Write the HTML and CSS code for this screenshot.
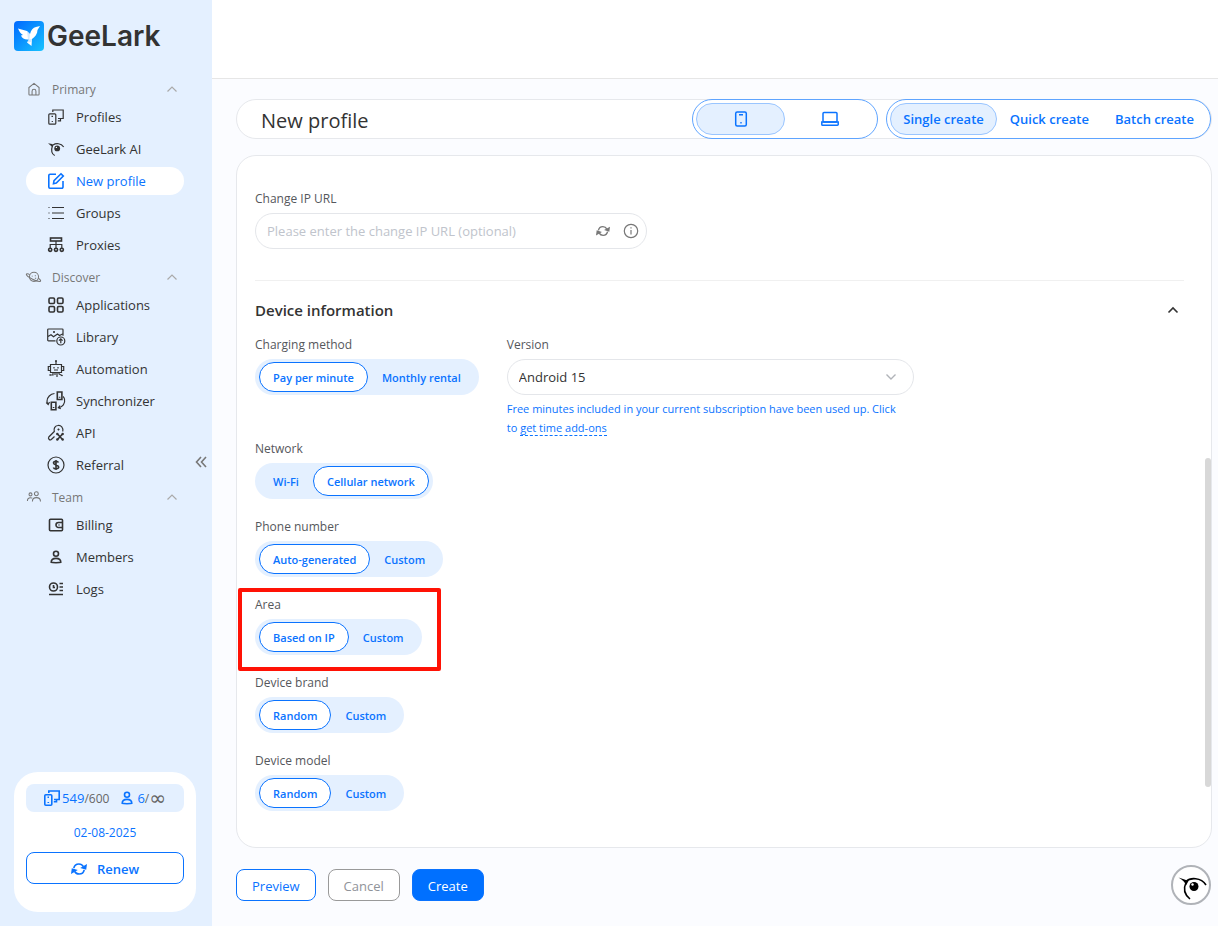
FILE: index.html
```html
<!DOCTYPE html>
<html lang="en">
<head>
    <meta charset="UTF-8">
    <meta name="viewport" content="width=device-width, initial-scale=1.0">
    <title>GeeLark - New profile</title>
    <link rel="stylesheet" href="styles.css">
</head>
<body>

<svg class="defs" aria-hidden="true">
    <symbol id="i-up" viewBox="0 0 12 12"><path d="M1.500 8.500 6 4l4.500 4.500"/></symbol>
    <symbol id="i-devices" viewBox="0 0 16 16">
        <rect x=".8" y="4.800" width="7" height="10.400" rx="1"/>
        <path d="M3.500 7.300h1.500M4.300 12v1M4.800 3V1h10.400v8.500H10M12.500 9.500v2.300H9.800"/>
    </symbol>
    <symbol id="i-user" viewBox="0 0 16 16">
        <circle cx="8" cy="4.800" r="2.500"/>
        <path d="M3.200 13.300c0-2.600 1.800-3.900 4.800-3.900s4.800 1.300 4.800 3.900c-1 .5-8.600.5-9.600 0z"/>
    </symbol>
    <symbol id="i-sync" viewBox="0 0 16 16">
        <path d="M2.800 7.200C3.300 4.600 5.300 3 7.900 3c1.900 0 3.500.9 4.400 2.500M13.200 8.800C12.700 11.400 10.700 13 8.100 13c-1.900 0-3.500-.9-4.400-2.500"/>
        <path class="fill" d="M9.200 6.900 16 3 15.200 8.800zM6.800 9.100 0 13 .8 7.200z"/>
    </symbol>
</svg>

<div class="layout">
    <aside class="sidebar">
        <div class="logo">
            <svg viewBox="0 0 30 30" width="30" height="30" aria-hidden="true">
                <defs>
                    <linearGradient id="logoBg" x1="0" y1="0" x2="1" y2="1">
                        <stop offset="0" stop-color="#0068ff"/>
                        <stop offset="1" stop-color="#17c3ff"/>
                    </linearGradient>
                </defs>
                <rect width="30" height="30" rx="4" fill="url(#logoBg)"/>
                <path fill="#fff" d="M4 7.500L13 10l3 3c1-4 3-6.500 6-7l4-1-2.500 4c0 4-2.500 7-5.500 9l-.5 7-4.500-3.500 2-3c-4 .5-7-1-8-4l2-.5c-2.500-1.500-4-4-5-6.500z"/>
                <path fill="#b9dcff" d="M13 10l3 3-.5 5.500-1.500 0zM13 21.500l2-3 3-.500-.5 3z" opacity=".6"/>
            </svg>
            <span>GeeLark</span>
        </div>

        <nav class="menu">
            <button class="menu-head" type="button">
                <svg viewBox="0 0 16 16"><path d="M2.200 14V6.300L8 1.500l5.800 4.800V14a.8.8 0 0 1-.8.8H3a.8.8 0 0 1-.8-.8zM5.800 14.500V10.500a2.200 2.200 0 0 1 4.400 0v4"/></svg>
                <span>Primary</span>
                <svg class="arrow"><use href="#i-up"/></svg>
            </button>
            <a class="menu-item" href="#">
                <svg><use href="#i-devices"/></svg>
                <span>Profiles</span>
            </a>
            <a class="menu-item" href="#">
                <svg viewBox="0 0 16 16">
                    <path class="fill" d="M0 2.300l4 .8 1.500.8L4.300 6z"/>
                    <path d="M5 4C8 2 13 2 15.700 6M4.500 4.500C3 9 4 13 6.700 14.600"/>
                    <circle class="fill" cx="9.200" cy="7.400" r="2.900"/>
                    <circle cx="8.400" cy="6.400" r=".7" fill="#fff" stroke="none"/>
                </svg>
                <span>GeeLark AI</span>
            </a>
            <a class="menu-item active" href="#">
                <svg viewBox="0 0 16 16" class="bold"><path d="M8 1.200H2A1.200 1.200 0 0 0 .8 2.400V14A1.200 1.200 0 0 0 2 15.200h11.800A1.200 1.200 0 0 0 15 14V8M5.500 10.700l.5-3L13 .8l2.300 2.300-7 7z"/></svg>
                <span>New profile</span>
            </a>
            <a class="menu-item" href="#">
                <svg viewBox="0 0 16 16"><path d="M4 2.500h12M4 8h12M4 13.500h12M.5 2.500h1M.5 8h1M.5 13.500h1"/></svg>
                <span>Groups</span>
            </a>
            <a class="menu-item" href="#">
                <svg viewBox="0 0 16 16">
                    <rect class="bold" x="2.500" y="1" width="11" height="3"/>
                    <path d="M8 4v7M2.200 11V7.500h11.600V11"/>
                    <g class="bold"><circle cx="2.200" cy="12.800" r="1.600"/><circle cx="8" cy="12.800" r="1.600"/><circle cx="13.800" cy="12.800" r="1.600"/></g>
                </svg>
                <span>Proxies</span>
            </a>

            <button class="menu-head" type="button">
                <svg viewBox="0 0 16 16">
                    <circle cx="8" cy="7.800" r="5.200"/>
                    <path d="M3.200 5.300C1 4-1 4.200-.7 5.200c.7 2.500 11.500 8.300 15.500 7.800 1.500-.3.700-1.800-1.800-3.800M6 6.500v1M9.500 6v1M9 9.500h1.500"/>
                </svg>
                <span>Discover</span>
                <svg class="arrow"><use href="#i-up"/></svg>
            </button>
            <a class="menu-item" href="#">
                <svg viewBox="0 0 16 16" class="bold">
                    <rect x="1" y="1" width="5.500" height="5.500" rx="1.200"/><rect x="9.500" y="1" width="5.500" height="5.500" rx="1.200"/>
                    <rect x="1" y="9.500" width="5.500" height="5.500" rx="1.200"/><rect x="9.500" y="9.500" width="5.500" height="5.500" rx="1.200"/>
                </svg>
                <span>Applications</span>
            </a>
            <a class="menu-item" href="#">
                <svg viewBox="0 0 16 16">
                    <path d="M7.500 11.800H.5A.8.8 0 0 1-.3 11V.8A.8.8 0 0 1 .5 0h13.700a.8.8 0 0 1 .8.800v6M0 7.500l3-1.700 2.500 2L9.500 5l2 1.500L15 4.800M5 3h2M6 2v2"/>
                    <circle cx="12.800" cy="12" r="4"/>
                    <path d="M12.800 14.300V10M11 11.700l1.800-1.800 1.800 1.800"/>
                </svg>
                <span>Library</span>
            </a>
            <a class="menu-item" href="#">
                <svg viewBox="0 0 16 16">
                    <path d="M2.500 3.500h11v8h-11zM8 3.500V0M2.500 5.500H.3v4h2.200M13.500 5.500h2.200v4h-2.200M6 6v1.500M10 6v1.500M6 9h4M7 11.500V14M9 11.500V16M5 11.500V14H2M11 11.500V13l3 1.500"/>
                    <circle class="fill" cx="8" cy="0" r="1"/><circle class="fill" cx="2" cy="14" r=".8"/><circle class="fill" cx="14" cy="14.500" r=".8"/>
                </svg>
                <span>Automation</span>
            </a>
            <a class="menu-item" href="#">
                <svg viewBox="0 0 16 16">
                    <path class="bold" d="M9.300-1h4.600v7.500H9.300zM3.300 9.300h4.600v7.500H3.300zM11.600 3.800v1M5.600 14v1"/>
                    <path d="M6.500.5C2.500 1-1 4-1 8.300c0 1.200.4 2 1 2.700M-1.800 9.500.2 11.500 1.500 9M10.500 14.800c4-.8 7-4 6-8.800-.2-1-.8-1.800-1.500-2.500M12 12.500l-1.700 2.200 2.500 1"/>
                </svg>
                <span>Synchronizer</span>
            </a>
            <a class="menu-item" href="#">
                <svg viewBox="0 0 16 16">
                    <path d="M14.800 6.500C15.500 3 13-.2 9.800.5 6.800 1 5.500 3.700 6.300 6.500L.8 12c-1 1.500.7 3.700 2.500 2.500l3.200-3M10.500 3.500v2M9.500 4.500h2"/>
                    <path class="bold" d="M9.500 9l5 5.500M14.500 9l-5 5.500"/>
                    <circle class="fill" cx="9.300" cy="9" r="1.200"/><circle class="fill" cx="14.700" cy="9" r="1.200"/><circle class="fill" cx="9.300" cy="14.500" r="1.200"/><circle class="fill" cx="14.700" cy="14.500" r="1.200"/>
                </svg>
                <span>API</span>
            </a>
            <a class="menu-item" href="#">
                <svg viewBox="0 0 16 16">
                    <circle cx="8" cy="8" r="8"/>
                    <path class="bold" d="M10.500 5.500C9.800 4 5.500 3.800 5.500 6.100c0 2.300 5.200 1.500 5.200 4 0 2.300-4.700 2.200-5.300.3M8 3v10"/>
                </svg>
                <span>Referral</span>
            </a>

            <button class="menu-head" type="button">
                <svg viewBox="0 0 16 16">
                    <circle cx="4" cy="5" r="1.700"/><circle cx="10.700" cy="4.300" r="2.200"/>
                    <path d="M.5 12.500C.5 9.800 2 8.800 4 8.800c.8 0 1.500.2 2 .5M6.200 13c0-3 1.700-4.300 4.500-4.300s4.700 1.300 4.700 4.300"/>
                </svg>
                <span>Team</span>
                <svg class="arrow"><use href="#i-up"/></svg>
            </button>
            <a class="menu-item" href="#">
                <svg viewBox="0 0 16 16" class="bold">
                    <rect x="1.500" y="2.200" width="13" height="11.600" rx="1"/>
                    <path d="M14.500 5.500h-4a2.500 2.500 0 0 0 0 5h4M10.500 8h1"/>
                </svg>
                <span>Billing</span>
            </a>
            <a class="menu-item" href="#">
                <svg class="bold"><use href="#i-user"/></svg>
                <span>Members</span>
            </a>
            <a class="menu-item" href="#">
                <svg viewBox="0 0 16 16" class="bold">
                    <circle cx="5.500" cy="6" r="4"/>
                    <path d="M5.500 4v2.500H7M11.500 2.500H15M11.500 6H15M11.500 9.500H15M1 13.500h14"/>
                </svg>
                <span>Logs</span>
            </a>
        </nav>

        <div class="plan">
            <div class="plan-stats">
                <svg class="bold"><use href="#i-devices"/></svg>
                <span><b>549</b>/600</span>
                <svg class="bold stat-user"><use href="#i-user"/></svg>
                <span><b>6</b>/<i>∞</i></span>
            </div>
            <div class="plan-date">02-08-2025</div>
            <button class="btn btn-outline renew" type="button">
                <svg class="bold"><use href="#i-sync"/></svg>
                Renew
            </button>
        </div>

        <button class="collapse" type="button" aria-label="Collapse menu">
            <svg viewBox="0 0 12 12"><path d="M6 1 1.500 6 6 11M11 1 6.500 6 11 11"/></svg>
        </button>
    </aside>

    <div class="main">
        <div class="topbar"></div>

        <main class="content">
            <header class="page-head">
                <h1>New profile</h1>
                <div class="tabs tabs-device">
                    <label>
                        <input type="radio" name="device" aria-label="Phone" checked>
                        <span><svg viewBox="0 0 16 16"><rect x="2.700" y="1" width="10.600" height="14" rx="1.500"/><path d="M6 3.800h4M7.300 11.700h1.400"/></svg></span>
                    </label>
                    <label>
                        <input type="radio" name="device" aria-label="Computer">
                        <span><svg class="laptop" viewBox="0 0 18 16"><rect x="2" y="1.500" width="14" height="9.500" rx="1"/><path d="M.8 11h16.400v2.500a.8.8 0 0 1-.8.800H1.600a.8.8 0 0 1-.8-.8z"/></svg></span>
                    </label>
                </div>
                <div class="tabs">
                    <label><input type="radio" name="mode" checked><span>Single create</span></label>
                    <label><input type="radio" name="mode"><span>Quick create</span></label>
                    <label><input type="radio" name="mode"><span>Batch create</span></label>
                </div>
            </header>

            <form class="panel" id="profileForm">
                <div class="field">
                    <label class="label" for="changeIp">Change IP URL</label>
                    <div class="input-box">
                        <input type="text" id="changeIp" placeholder="Please enter the change IP URL (optional)">
                        <svg><use href="#i-sync"/></svg>
                        <svg viewBox="0 0 16 16" class="info"><circle cx="8" cy="8" r="6.700"/><path d="M8 7v4.500M8 4.300v1.200"/></svg>
                    </div>
                </div>

                <div class="section-head">
                    <h2>Device information</h2>
                    <svg><use href="#i-up"/></svg>
                </div>

                <div class="row">
                    <div class="field">
                        <div class="label">Charging method</div>
                        <div class="segment">
                            <label><input type="radio" name="charging" checked><span>Pay per minute</span></label>
                            <label><input type="radio" name="charging"><span>Monthly rental</span></label>
                        </div>
                    </div>
                    <div class="field field-version">
                        <label class="label" for="version">Version</label>
                        <div class="select-box">
                            <select id="version">
                                <option>Android 15</option>
                            </select>
                            <svg><use href="#i-up"/></svg>
                        </div>
                        <p class="hint">Free minutes included in your current subscription have been used up. Click to <a href="#">get time add-ons</a></p>
                    </div>
                </div>

                <div class="row">
                    <div class="field">
                        <div class="label">Network</div>
                        <div class="segment">
                            <label><input type="radio" name="network"><span>Wi-Fi</span></label>
                            <label><input type="radio" name="network" checked><span>Cellular network</span></label>
                        </div>
                    </div>
                </div>

                <div class="row">
                    <div class="field">
                        <div class="label">Phone number</div>
                        <div class="segment">
                            <label><input type="radio" name="phone" checked><span>Auto-generated</span></label>
                            <label><input type="radio" name="phone"><span>Custom</span></label>
                        </div>
                    </div>
                </div>

                <div class="row">
                    <div class="field">
                        <div class="label">Area</div>
                        <div class="segment">
                            <label><input type="radio" name="area" checked><span>Based on IP</span></label>
                            <label><input type="radio" name="area"><span>Custom</span></label>
                        </div>
                        <div class="highlight"></div>
                    </div>
                </div>

                <div class="row">
                    <div class="field">
                        <div class="label">Device brand</div>
                        <div class="segment">
                            <label><input type="radio" name="brand" checked><span>Random</span></label>
                            <label><input type="radio" name="brand"><span>Custom</span></label>
                        </div>
                    </div>
                </div>

                <div class="row">
                    <div class="field">
                        <div class="label">Device model</div>
                        <div class="segment">
                            <label><input type="radio" name="model" checked><span>Random</span></label>
                            <label><input type="radio" name="model"><span>Custom</span></label>
                        </div>
                    </div>
                </div>

                <div class="scroll-thumb"></div>
            </form>

            <footer class="actions">
                <button class="btn btn-outline" type="button">Preview</button>
                <button class="btn btn-grey" type="button">Cancel</button>
                <button class="btn btn-primary" type="submit" form="profileForm">Create</button>
                <button class="assistant" type="button" aria-label="GeeLark AI">
                    <svg viewBox="0 0 36 36">
                        <path class="fill" d="M5.500 10.500l6 2 4 1.500-2.500 4.500c-.5-3-3-5-7.500-8z"/>
                        <path d="M13 14.500C17 10.500 28 10 33 18M13 15.500C10 22 12 28 17 32"/>
                        <circle class="fill" cx="21" cy="19.500" r="4.500"/>
                        <circle cx="19.500" cy="17.500" r="1.200" fill="#fff" stroke="none"/>
                    </svg>
                </button>
            </footer>
        </main>
    </div>
</div>

</body>
</html>
```

FILE: styles.css
```css
* {
    box-sizing: border-box;
}
body {
    margin: 0;
    font-family: "Open Sans", "Noto Sans", sans-serif;
    font-size: 13px;
    color: #333;
    background-color: #fbfcff;
}
button,
input,
select {
    font: inherit;
    color: inherit;
}
button {
    cursor: pointer;
}
svg {
    flex: none;
    width: 16px;
    height: 16px;
    fill: none;
    stroke: currentColor;
    stroke-width: 1.2;
    overflow: visible;
}
svg .fill {
    fill: currentColor;
    stroke: none;
}
svg.bold,
svg .bold {
    stroke-width: 1.6;
}
.defs {
    display: none;
}
.layout {
    display: flex;
    height: 100vh;
}

/* sidebar */
.sidebar {
    position: relative;
    display: flex;
    flex-direction: column;
    flex: none;
    width: 212px;
    background-color: #e4f0ff;
}
.logo {
    display: flex;
    align-items: center;
    gap: 3px;
    height: 75px;
    padding: 0 14px 3px;
    font-family: Inter, sans-serif;
    font-size: 28px;
    font-weight: 600;
}
.logo svg {
    width: 30px;
    height: 30px;
    stroke: none;
}
.menu {
    display: flex;
    flex-direction: column;
    padding: 0 28px 0 26px;
}
.menu-head {
    display: flex;
    align-items: center;
    height: 28px;
    padding: 0 6px 0 1px;
    border: 0;
    background: none;
    font-size: 12px;
    color: #777;
}
.menu-head svg {
    width: 14px;
    height: 14px;
}
.menu-head span {
    flex: 1;
    padding-left: 11px;
    text-align: left;
}
.menu-head .arrow {
    width: 12px;
    height: 12px;
    color: #aaa;
}
.menu-item {
    display: flex;
    align-items: center;
    gap: 12px;
    height: 28px;
    margin-bottom: 4px;
    padding: 0 22px;
    border-radius: 14px;
    color: #333;
    text-decoration: none;
}
.menu-item.active {
    background-color: #fff;
    color: #0a73ff;
}
.plan {
    display: flex;
    flex-direction: column;
    height: 140px;
    margin: auto 16px 14px 14px;
    padding: 12px;
    border-radius: 24px;
    background-color: #fff;
}
.plan-stats {
    display: flex;
    align-items: center;
    justify-content: center;
    gap: 2px;
    height: 28px;
    border-radius: 8px;
    background-color: #e4f0ff;
    font-size: 12px;
    color: #666;
}
.plan-stats svg,
.plan-stats b {
    color: #0a73ff;
    font-weight: 400;
}
.plan-stats b {
    font-size: 13px;
}
.plan-stats i {
    font-family: "DejaVu Sans", sans-serif;
    font-size: 20px;
    font-style: normal;
    line-height: 12px;
    vertical-align: -2px;
}
.stat-user {
    margin-left: 8px;
}
.plan-date {
    padding-top: 1px;
    line-height: 39px;
    text-align: center;
    font-size: 12px;
    color: #0a73ff;
}
.collapse {
    position: absolute;
    top: 50%;
    right: 5px;
    width: 12px;
    height: 12px;
    margin-top: -7px;
    padding: 0;
    border: 0;
    background: none;
    color: #777;
}
.collapse svg {
    display: block;
    width: 12px;
    height: 12px;
    stroke-width: 1.6;
}

/* main area */
.main {
    display: flex;
    flex-direction: column;
    flex: 1;
    min-width: 0;
}
.topbar {
    height: 79px;
    border-bottom: 1px solid #e6e6e6;
    background-color: #fff;
}
.content {
    display: flex;
    flex-direction: column;
    flex: 1;
    padding: 20px 6px 21px 24px;
}
.page-head {
    display: flex;
    align-items: center;
    gap: 8px;
    height: 40px;
    border: 1px solid #e6e8ec;
    border-radius: 20px;
    background-color: #fff;
}
.page-head h1 {
    flex: 1;
    margin: 0;
    padding: 2px 0 0 24px;
    font-size: 20px;
    font-weight: 500;
}
.tabs {
    display: flex;
    height: 40px;
    padding: 3px;
    border: 1px solid #5ea4ff;
    border-radius: 20px;
    background-color: #fff;
    font-weight: 600;
    color: #0a73ff;
}
.tabs input,
.segment input {
    position: absolute;
    opacity: 0;
}
.tabs span {
    display: flex;
    align-items: center;
    justify-content: center;
    height: 32px;
    padding: 0 12px;
    border: 1px solid transparent;
    border-radius: 16px;
    cursor: pointer;
}
.tabs input:checked + span {
    border-color: #99c5ff;
    background-color: #e4f0ff;
}
.tabs-device span {
    width: 89px;
}
.tabs svg {
    stroke-width: 1.5;
}
.tabs .laptop {
    width: 18px;
}
.panel {
    position: relative;
    flex: 1;
    margin-top: 16px;
    padding: 33px 27px 0 18px;
    border: 1px solid #e6e8ec;
    border-radius: 20px;
    background-color: #fff;
}
.field {
    position: relative;
}
.label {
    display: block;
    height: 20px;
    margin-bottom: 4px;
    font-size: 12px;
    font-weight: 500;
    line-height: 20px;
    color: #55575c;
}
.input-box,
.select-box {
    display: flex;
    align-items: center;
    height: 36px;
    border: 1px solid #e4e6ea;
    border-radius: 18px;
}
.input-box {
    gap: 13px;
    max-width: 392px;
    padding: 0 7px 0 11px;
    color: #777;
}
.input-box input {
    flex: 1;
    padding: 0;
    border: 0;
    outline: 0;
    background: none;
}
.input-box input::placeholder {
    color: #c0c4cc;
}
.input-box svg {
    width: 14px;
    height: 14px;
    stroke-width: 1.6;
}
.input-box .info {
    width: 16px;
    height: 16px;
    stroke-width: 1.2;
}
.section-head {
    display: flex;
    align-items: center;
    justify-content: space-between;
    margin-top: 31px;
    padding: 16px 5px 12px 0;
    border-top: 1px solid #f0f0f0;
}
.section-head h2 {
    margin: 0;
    font-size: 15px;
    font-weight: 600;
    line-height: 26px;
}
.section-head svg {
    width: 12px;
    height: 12px;
    stroke-width: 1.6;
}
.row {
    display: flex;
    gap: 28px;
    min-height: 76px;
    margin-bottom: 2px;
}
.segment {
    display: flex;
    height: 36px;
    padding: 3px 4px;
    border-radius: 18px;
    background-color: #e4f0ff;
    font-size: 11px;
    font-weight: 600;
    color: #0a73ff;
}
.segment span {
    display: block;
    height: 30px;
    padding: 0 13px;
    border: 1px solid transparent;
    border-radius: 15px;
    line-height: 30px;
    cursor: pointer;
}
.segment input:checked + span {
    border-color: #0a73ff;
    background-color: #fff;
}
.field-version {
    width: 407px;
}
.select-box {
    position: relative;
}
.select-box select {
    width: 100%;
    height: 34px;
    padding: 0 11px;
    border: 0;
    border-radius: 18px;
    outline: 0;
    background: none;
    appearance: none;
}
.select-box svg {
    position: absolute;
    right: 16px;
    width: 12px;
    height: 12px;
    stroke-width: 1.4;
    color: #b0b3b8;
    transform: rotate(180deg);
    pointer-events: none;
}
.hint {
    margin: 4px 0 0;
    padding-right: 12px;
    font-size: 11px;
    line-height: 19px;
    color: #0a73ff;
}
.hint a {
    border-bottom: 1px dashed #0a73ff;
    color: inherit;
    text-decoration: none;
}
/* red frame over the Area field */
.highlight {
    position: absolute;
    top: -7px;
    left: -17px;
    width: 203px;
    height: 83px;
    border: 4px solid #ff1205;
    border-radius: 2px;
    pointer-events: none;
}
.scroll-thumb {
    position: absolute;
    top: 302px;
    right: 0;
    width: 6px;
    height: 329px;
    border-radius: 3px;
    background-color: #d8d8d8;
}
.actions {
    display: flex;
    align-items: center;
    gap: 12px;
    height: 40px;
    margin-top: 17px;
    padding-right: 1px;
}
.btn {
    height: 32px;
    padding: 2px 15px 0;
    border: 1px solid #0a73ff;
    border-radius: 8px;
    background-color: #fff;
    font-size: 13px;
}
.btn-outline {
    color: #0a73ff;
}
.btn-grey {
    border-color: #999;
    color: #909399;
}
.btn-primary {
    background-color: #0070ff;
    color: #fff;
}
.renew {
    display: flex;
    align-items: center;
    justify-content: center;
    gap: 10px;
    font-weight: 600;
}
.assistant {
    width: 40px;
    height: 40px;
    margin-left: auto;
    padding: 0;
    border: 2px solid #b0b3b8;
    border-radius: 50%;
    background-color: #fff;
    color: #000;
}
.assistant svg {
    display: block;
    width: 36px;
    height: 36px;
    stroke-width: 1.6;
}
```
